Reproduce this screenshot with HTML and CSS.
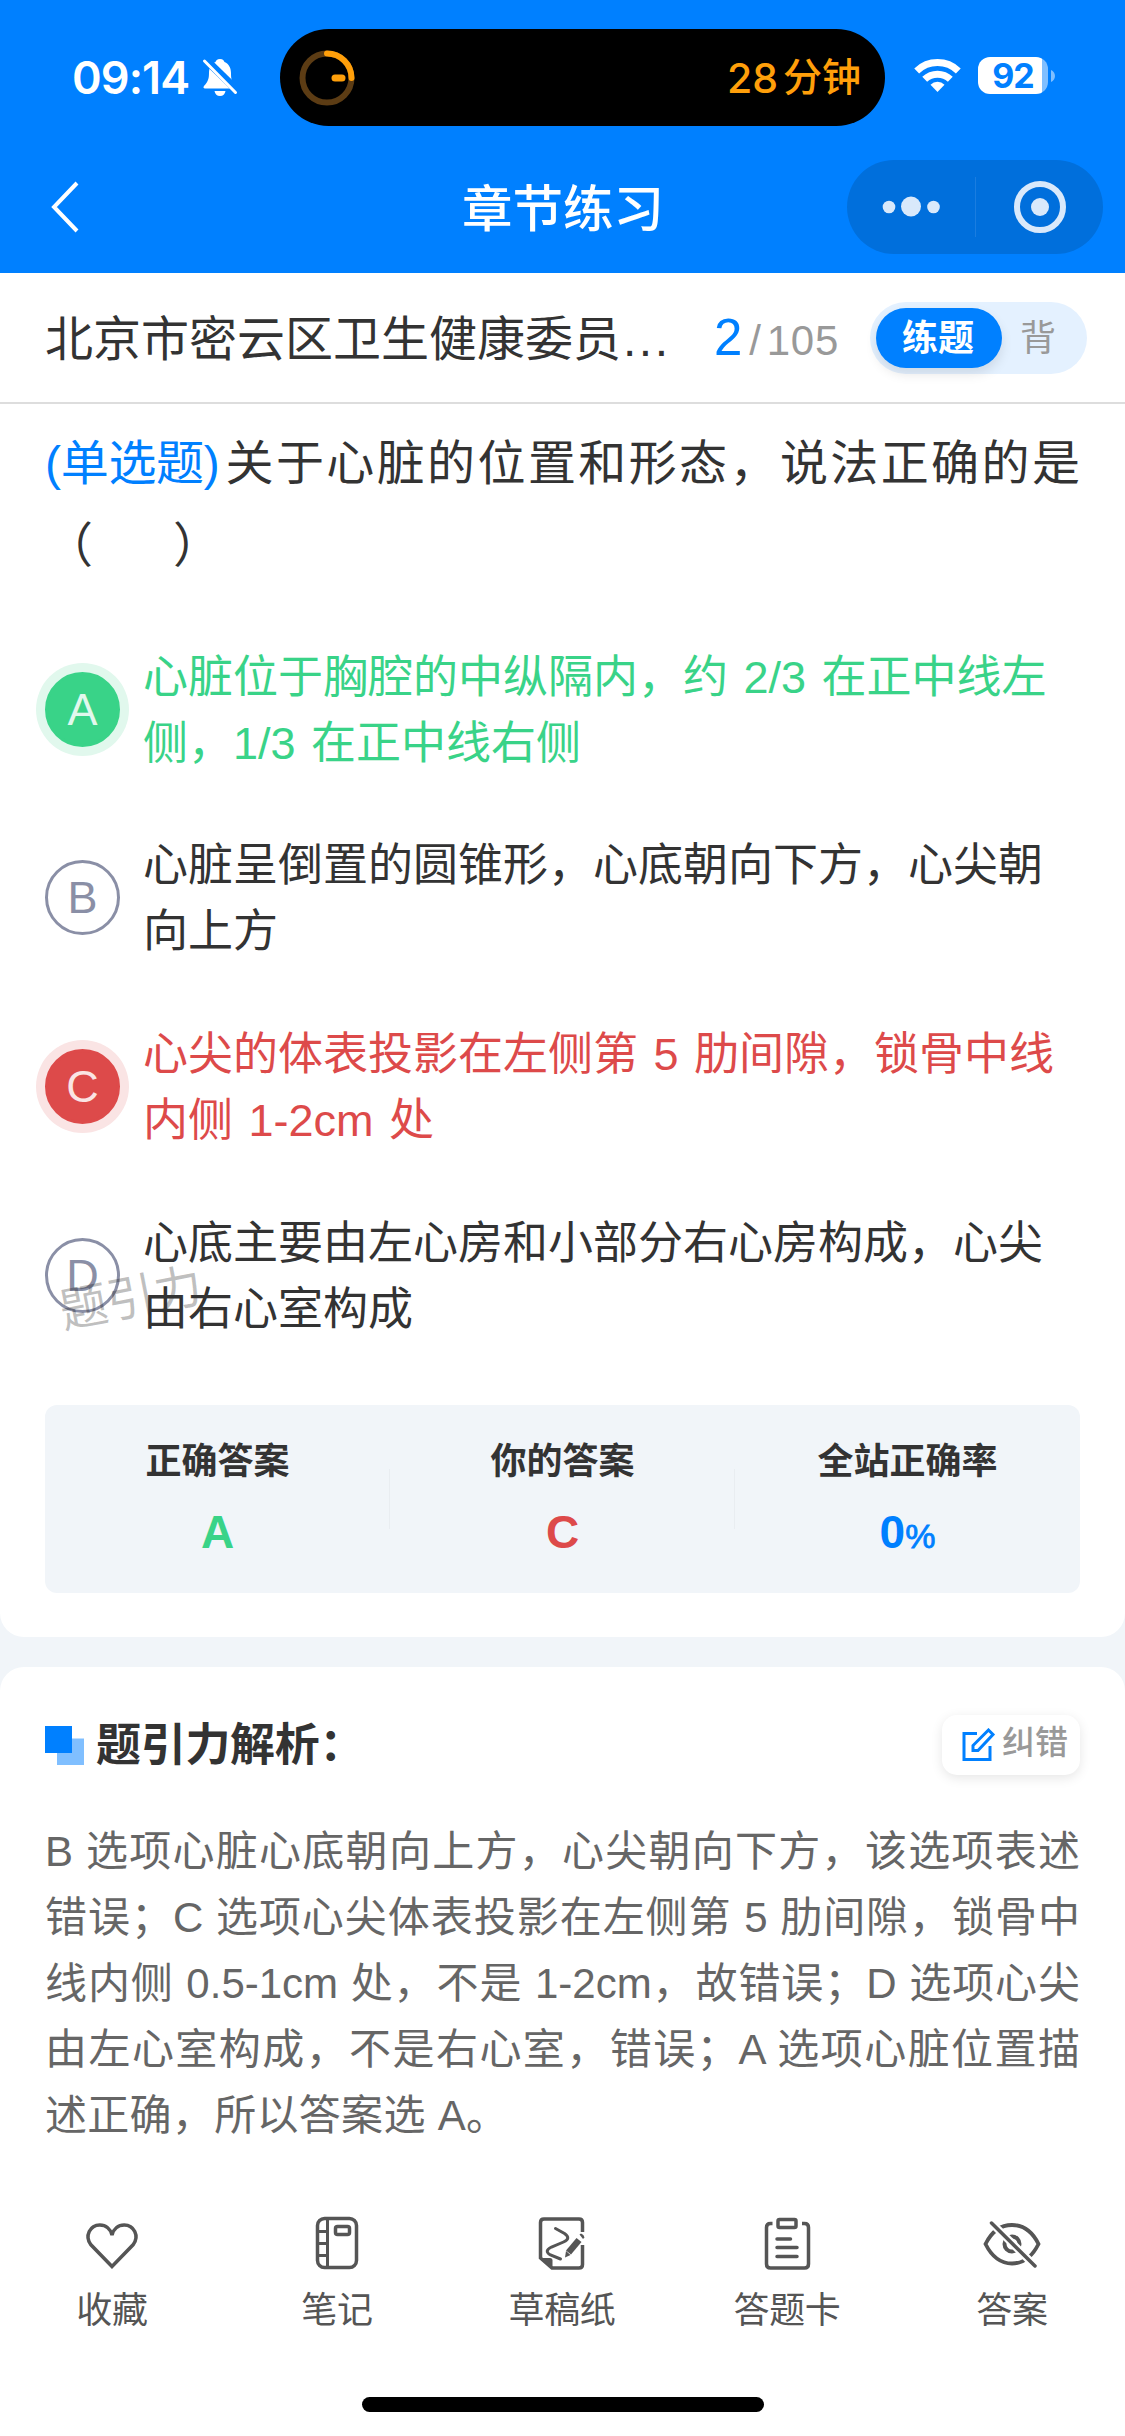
FILE: index.html
```html
<!DOCTYPE html>
<html lang="zh-CN">
<head>
<meta charset="utf-8">
<title>章节练习</title>
<link rel="stylesheet" href="styles.css">
</head>
<body>
<div class="app">
  <header class="top">
    <div class="status">
      <span class="time">09:14</span>
      <svg class="bell" viewBox="0 0 34 37" width="34" height="37"><path d="M17 0c-3 0-4 1.500-4.500 3C8 5 6 9 6 14c0 6-1 8.500-5 13-1 1.500-.5 2.500 1 2.500h29.500c1.500 0 2-1 1-2.500-4-4.500-4.500-7-4.500-13 0-5-2-9-6.500-11C21 1.500 20 0 17 0z" fill="#fff"/><path d="M11.500 32h11c-.5 3-2.500 5-5.500 5s-5-2-5.500-5z" fill="#fff"/><path d="M1-1 38 35" stroke="#0080ff" stroke-width="8"/><path d="M1.500 2 32.500 33.500" stroke="#fff" stroke-width="3" stroke-linecap="round"/></svg>
      <div class="island">
        <svg width="56" height="56" viewBox="0 0 56 56" fill="none" stroke-width="6"><circle cx="28" cy="28" r="24.500" stroke="#5c3c14"/><path d="M28 3.500A24.500 24.500 0 0 1 52.500 28" stroke="#ff9f0a" stroke-linecap="round"/><path d="M36 28h7" stroke="#ff9f0a" stroke-width="7" stroke-linecap="round"/></svg>
        <span class="remain"><b>28</b>分钟</span>
      </div>
      <svg class="wifi" width="47" height="34" viewBox="0 0 47 34" fill="none" stroke="#fff" stroke-width="7"><path d="M2.700 13a30 30 0 0 1 41.600 0"/><path d="M10.700 21.300a18.500 18.500 0 0 1 25.600 0"/><path d="M23.500 34l-7-7.300a10 10 0 0 1 14 0z" fill="#fff" stroke="none"/></svg>
      <div class="battery"><span>92</span></div>
      <svg class="nub" width="5" height="14" viewBox="0 0 5 14"><path d="M0 1c2.500 1 4 3.500 4 6s-1.500 5-4 6z" fill="#80bfff"/></svg>
    </div>
    <div class="nav">
      <svg class="back" width="30" height="52" viewBox="0 0 30 52" fill="none" stroke="#fff" stroke-width="4"><path d="M27 2 4 26l23 24"/></svg>
      <h1>章节练习</h1>
      <div class="capsule">
        <svg width="256" height="94" viewBox="0 0 256 94"><g fill="#d9e9fb"><circle cx="42" cy="47" r="6.300"/><circle cx="64" cy="46.500" r="10"/><circle cx="86.500" cy="47" r="6.300"/><circle cx="193" cy="47" r="9"/></g><circle cx="193" cy="47" r="23" fill="none" stroke="#d9e9fb" stroke-width="6"/><path d="M128.500 17v60" stroke="#1a7de0" stroke-width="1"/></svg>
      </div>
    </div>
  </header>
  <div class="subhead">
    <div class="chapter">北京市密云区卫生健康委员<span class="dots">...</span></div>
    <div class="progress"><b>2</b><i>/</i>105</div>
    <div class="toggle"><span class="on">练题</span><span class="off">背</span></div>
  </div>
  <main class="card quiz">
    <p class="question"><span class="first"><span class="kind">(单选题)</span>关于心脏的位置和形态，说法正确的是</span><br>（&nbsp;&nbsp;&nbsp;&nbsp;&nbsp;&nbsp;）</p>
    <div class="options">
      <div class="option right"><span class="mark">A</span><p>心脏位于胸腔的中纵隔内，约 2/3 在正中线左<br>侧，1/3 在正中线右侧</p></div>
      <div class="option"><span class="mark">B</span><p>心脏呈倒置的圆锥形，心底朝向下方，心尖朝<br>向上方</p></div>
      <div class="option wrong"><span class="mark">C</span><p>心尖的体表投影在左侧第 5 肋间隙，锁骨中线<br>内侧 1-2cm 处</p></div>
      <div class="option"><span class="mark">D</span><span class="watermark">题引力</span><p>心底主要由左心房和小部分右心房构成，心尖<br>由右心室构成</p></div>
    </div>
    <div class="stats">
      <div class="stat"><span>正确答案</span><b class="green">A</b></div>
      <div class="stat"><span>你的答案</span><b class="red">C</b></div>
      <div class="stat"><span>全站正确率</span><b class="blue">0<small>%</small></b></div>
    </div>
  </main>
  <section class="card analysis">
    <div class="head">
      <svg width="39" height="39" viewBox="0 0 39 39"><path d="M12 12.500h27V39H12z" fill="#80bfff"/><path d="M0 0h27v27H0z" fill="#0080ff"/></svg>
      <h2>题引力解析：</h2>
      <div class="fix"><svg width="35" height="34" viewBox="0 0 35 34" fill="none" stroke="#0080ff" stroke-width="3"><path d="M16 5.500H3v26h26V18"/><path d="M27.500 2l4.500 4.500L17 22.500H12v-5z"/></svg><span>纠错</span></div>
    </div>
    <div class="explain">
      <p>B 选项心脏心底朝向上方，心尖朝向下方，该选项表述</p>
      <p>错误；C 选项心尖体表投影在左侧第 5 肋间隙，锁骨中</p>
      <p>线内侧 0.5-1cm 处，不是 1-2cm，故错误；D 选项心尖</p>
      <p>由左心室构成，不是右心室，错误；A 选项心脏位置描</p>
      <p class="last">述正确，所以答案选 A。</p>
    </div>
  </section>
  <footer class="tabs">
    <div class="tab"><svg viewBox="0 0 60 60"><path d="M30 52.500 8.700 30.500C2.500 22 8 11 17.800 11 24 11 28.500 15 30 21c1.500-6 6-10 12.200-10C52 11 57.500 22 51.300 30.500z"/></svg><span>收藏</span></div>
    <div class="tab"><svg viewBox="0 0 60 60"><rect x="10.500" y="4.500" width="39" height="49" rx="7"/><path d="M20.500 4.500v49M10.500 17.500h10M10.500 29.500h10M10.500 41.500h10" stroke-width="3"/><rect x="28.500" y="12.500" width="14" height="8" rx="2"/></svg><span>笔记</span></div>
    <div class="tab"><svg viewBox="0 0 60 60"><path d="M50.500 18V8.500q0-3.500-3.500-3.500H12Q8.500 5 8.500 8.500V44L20 54h27q3.500 0 3.500-3.500V31"/><path d="M7.500 44H18q2.500 0 2.500 2.500V55z" fill="#555" stroke="none"/><path d="M23.500 14.500l9 5q7 5-1 8.500l-12 5q-8 4-1 8l10 4" stroke-width="3" stroke-linecap="round"/><path d="M36.500 38.500 47 26" stroke-width="6.500"/><path d="M33 43.500l1-6.500 4.500 4zM47.500 20.500l1.500-1q3 1 3.500 4l-1.500 1.500z" fill="#555" stroke="none"/></svg><span>草稿纸</span></div>
    <div class="tab"><svg viewBox="0 0 60 60"><path d="M15.500 9.500h-2q-4 0-4 4V50q0 4 4 4h34q4 0 4-4V13.500q0-4-4-4H45"/><rect x="21" y="5.500" width="18" height="8" rx="1.500"/><path d="M20 25h13.500M20 33.500h20M20 42.500h20" stroke-linecap="round"/></svg><span>答题卡</span></div>
    <div class="tab"><svg viewBox="0 0 60 60"><path d="M3.500 30C11 15 20 11 30 11s19 4 26.500 19C49 45 40 49.500 30 49.500S11 45 3.500 30z" stroke-width="3.800"/><circle cx="30" cy="30" r="7.500" stroke-width="4"/><path d="M7 6.500 54 53" stroke="#fff" stroke-width="8"/><path d="M9.500 9 53 52" stroke-linecap="round"/></svg><span>答案</span></div>
  </footer>
  <div class="home"></div>
</div>
</body>
</html>
```

FILE: styles.css
```css
* { box-sizing: border-box; }
body, p, h1, h2 { margin: 0; }
body {
  width: 1125px;
  font-family: "Liberation Sans", "Noto Sans CJK SC", sans-serif;
  color: #333;
  background: #fff;
}
svg { display: block; flex: none; }
.app { display: flex; flex-direction: column; height: 2436px; background: #f1f5f9; overflow: hidden; }

.top { background: #0080ff; height: 273px; flex: none; }
.status { height: 155px; padding-left: 72px; display: flex; align-items: center; }
.time { width: 131px; font: 600 45px/54px Inter, sans-serif; color: #fff; white-space: nowrap; letter-spacing: -0.9px; }
.bell { overflow: visible; }
.island {
  width: 605px; height: 97px; margin-left: 43px; padding: 0 24px 0 19px;
  border-radius: 49px; background: #000; color: #ff9f0a;
  display: flex; align-items: center; justify-content: space-between;
}
.remain { display: flex; align-items: center; gap: 5px; font-size: 39px; font-weight: 500; line-height: 50px; }
.remain b { font: 500 41px/50px Inter, sans-serif; }
.wifi { margin-left: 29px; margin-top: -5px; }
.battery {
  width: 70px; height: 37px; margin: -4px 3px 0 17px; border-radius: 12px;
  background: linear-gradient(to right, #fff 64px, #80bfff 64px);
  display: flex; justify-content: center;
}
.battery span { font: 700 34px/37px Inter, sans-serif; color: #0080ff; letter-spacing: -1px; }
.nub { margin-top: -4px; }
.nav { height: 104px; padding: 0 22px 0 50px; display: flex; align-items: center; justify-content: space-between; }
.nav h1 { font-size: 50.5px; font-weight: 500; line-height: 60px; color: #fff; margin-left: 199px; padding-top: 5px; }
.capsule { width: 256px; height: 94px; border-radius: 47px; background: #006fdc; }

.subhead {
  height: 131px; flex: none; padding: 0 38px 0 45px; background: #fff;
  border-bottom: 2px solid #ddd; display: flex; align-items: center;
}
.chapter { width: 669px; font-size: 48px; line-height: 64px; padding-top: 4px; white-space: nowrap; }
.dots { letter-spacing: 2.5px; margin-left: 2px; }
.progress { width: 156px; display: flex; align-items: baseline; font-size: 42px; letter-spacing: .8px; color: #999; }
.progress b { font-size: 51px; font-weight: 400; color: #0080ff; }
.progress i { font-style: normal; margin: 0 5px 0 6px; }
.toggle { width: 217px; height: 72px; padding: 6px; border-radius: 36px; background: #e4f1ff; display: flex; font-size: 36px; line-height: 62px; }
.on { width: 126px; height: 60px; padding-right: 2px; border-radius: 30px; background: #0080ff; color: #fff; font-weight: 700; text-align: center; box-shadow: 0 6px 12px rgba(0, 0, 0, .1); }
.off { margin-left: 18px; color: #999; }

.card { background: #fff; padding: 0 45px; flex: none; }
.quiz { height: 1233px; padding-top: 19px; border-radius: 0 0 24px 24px; }
.question { font-size: 48px; line-height: 82px; height: 222px; white-space: nowrap; }
.first { letter-spacing: 2.4px; }
.kind { color: #0080ff; letter-spacing: -.3px; margin-right: 6px; }
.options { display: flex; flex-direction: column; gap: 56.700px; margin-top: -2px; }
.option { position: relative; height: 132px; display: flex; align-items: center; }
.option p { position: relative; margin-left: 23px; padding-top: 3px; font-size: 45px; line-height: 66px; word-spacing: 3px; white-space: nowrap; }
.mark {
  width: 75px; height: 75px; border: 3px solid #8a8fa6; border-radius: 50%;
  font-size: 45px; line-height: 69px; text-align: center; color: #8a8fa6;
}
.right p { color: #39d388; }
.right .mark { background: #39d388; border-color: #39d388; color: #e1f8ed; box-shadow: 0 0 0 9px #e1f8ed; }
.wrong p { color: #dd4a4a; }
.wrong .mark { background: #dd4a4a; border-color: #dd4a4a; color: #fae4e4; box-shadow: 0 0 0 9px #fae4e4; }
.watermark { position: absolute; left: 14px; top: 55px; font-size: 48px; line-height: 70px; color: rgba(0, 0, 0, .25); transform: rotate(-11deg); }
.stats { height: 188px; margin-top: 64px; border-radius: 12px; background: #f1f5f9; display: flex; }
.stat { position: relative; flex: 1; padding-top: 31px; display: flex; flex-direction: column; align-items: center; }
.stat + .stat::before { content: ""; position: absolute; left: -1px; top: 64px; width: 1px; height: 60px; background: #e9edf1; }
.stat span { font-size: 36px; font-weight: 700; line-height: 52px; }
.stat b { font-size: 46px; line-height: 52px; margin-top: 18px; }
.stat small { font-size: 34px; font-weight: 400; -webkit-text-stroke: .8px; }
.green { color: #39d388; }
.red { color: #dd4a4a; }
.blue { color: #0080ff; }

.analysis { margin-top: 30px; padding-top: 48px; border-radius: 24px 24px 0 0; flex: 1; }
.head { height: 60px; display: flex; align-items: center; }
.head h2 { margin-left: 12px; padding-top: 2px; font-size: 45px; letter-spacing: -.3px; line-height: 60px; font-weight: 700; flex: 1; }
.fix { width: 138px; height: 60px; padding-left: 19px; border-radius: 15px; background: #fff; box-shadow: 0 3px 12px rgba(0, 0, 0, .1); display: flex; align-items: center; gap: 6px; font-size: 33px; font-weight: 500; line-height: 48px; color: #999; }
.fix span { margin-top: -4px; }
.explain { margin-top: 44px; font-size: 42px; line-height: 66px; color: #666; }
.explain p { white-space: nowrap; text-align-last: justify; text-justify: inter-character; }
.explain .last { text-align-last: left; letter-spacing: .3px; }

.tabs { flex: none; height: 150px; background: #fff; display: flex; }
.tab { flex: 1; display: flex; flex-direction: column; align-items: center; font-size: 36px; line-height: 50px; color: #555; }
.tab span { margin-left: -1px; letter-spacing: -.3px; }
.tab svg { width: 60px; height: 60px; fill: none; stroke: #555; stroke-width: 3.5; margin: 0 1px 12px 0; }
.home { flex: none; width: 402px; height: 15px; margin: 33px auto 24px; border-radius: 8px; background: #000; box-shadow: 0 0 0 400px #fff; clip-path: inset(-33px -400px -24px -400px); }
```
